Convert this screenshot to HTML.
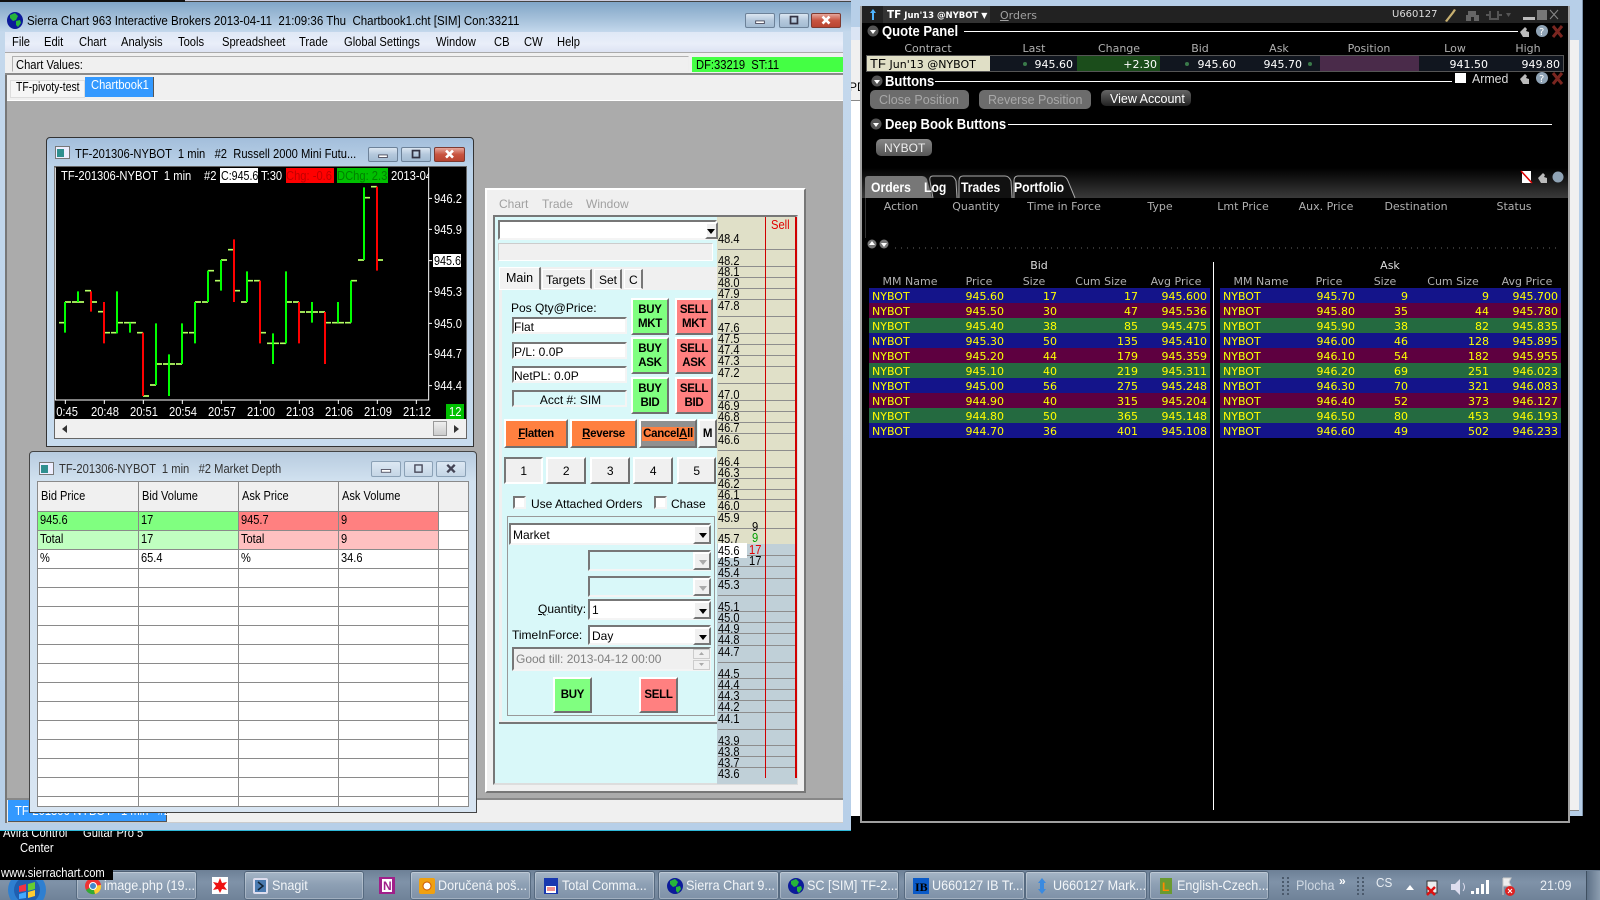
<!DOCTYPE html>
<html lang="en">
<head>
<meta charset="utf-8">
<title>Sierra Chart and IB Trader Workstation</title>
<style>
html,body{margin:0;padding:0;width:1600px;height:900px;overflow:hidden;background:#000}
body{position:relative;font:12px "Liberation Sans",sans-serif;color:#000}
.b{position:absolute;box-sizing:border-box}
.t{position:absolute;white-space:pre;line-height:14px}
.c{font-size:13px;transform:scaleX(.86);transform-origin:0 50%}
.bt{position:absolute;box-sizing:border-box;border:2px solid;border-color:#fff #707070 #707070 #fff;text-align:center;font-weight:bold;font-size:11.5px;letter-spacing:-.3px;line-height:14px;white-space:pre;display:flex;align-items:center;justify-content:center}
.sk{position:absolute;box-sizing:border-box;border:2px solid;border-color:#777 #f4f4f4 #f4f4f4 #777;background:#fff;font-size:12px;padding-left:2px;padding-top:2px;display:flex;align-items:center;white-space:pre}
.g{background:#80ff80}.rd{background:#ff8080}
.dd{position:absolute;box-sizing:border-box;width:18px;border:2px solid;border-color:#fff #777 #777 #fff;background:#f0f0f0}
.dd:after{content:"";position:absolute;left:4px;top:6px;border:4px solid transparent;border-top:5px solid #000}
.dd.o:after{border-top-color:#aaa}
.dd.sm:after{left:0;top:5px}
.wb{position:absolute;box-sizing:border-box;height:15px;border:1px solid #6d8299;border-radius:2px;background:linear-gradient(#dbe6f1,#b4c8dc 50%,#a3bbd2)}
.wb.x{background:linear-gradient(#e6a79b,#c8533f 50%,#b84430);border-color:#7e3a30}
.wb.o{background:linear-gradient(#dde8f3,#c5d6e6);border-color:#8ba1b6}
.wb svg{position:absolute;left:0;top:0;width:100%;height:100%}
.l{position:absolute;left:718px;width:78px;height:1px;background:#8d8d8d}
.p{position:absolute;left:718px;font-size:13px;line-height:14px;transform:scaleX(.85);transform-origin:0 50%}
.w{position:absolute;font:11px/14px "DejaVu Sans",sans-serif;color:#b0b0b0;transform:translateX(-50%);white-space:pre}
.v{position:absolute;font:11px/15px "DejaVu Sans",sans-serif;color:#fff;white-space:pre}
.hd{position:absolute;font:bold 15px/16px "Liberation Sans",sans-serif;color:#fff;transform:scaleX(.87);transform-origin:0 50%;white-space:pre}
.r{position:absolute;width:341px;height:15px;color:#ff0;font:11px/17px "DejaVu Sans",sans-serif}
.r span{position:absolute;top:0}
.r span:nth-child(1){left:3px}.r span:nth-child(2){right:206px}.r span:nth-child(3){right:153px}.r span:nth-child(4){right:72px}.r span:nth-child(5){right:3px}
.u{background:#14148a}.m{background:#5e0040}.n{background:#246a40}
table.dp{position:absolute;left:37px;top:481px;width:431px;border-collapse:collapse;table-layout:fixed;background:#fff}
table.dp td{border:1px solid #8a8a8a;height:18px;padding:0 0 0 2px;font-size:13px;line-height:14px;overflow:hidden;white-space:pre}
table.dp tr.e td{height:9px}
table.dp td span{display:inline-block;position:relative;top:-1px;transform:scaleX(.85);transform-origin:0 50%}
.tb{position:absolute;top:871px;height:29px;box-sizing:border-box;border:1px solid #566a80;border-top-color:#4f6074;border-radius:3px;background:linear-gradient(#a5b5c6,#8ea0b4 45%,#7e91a7);box-shadow:inset 0 0 0 1px rgba(255,255,255,.28);color:#f2f5f8;font-size:14px;line-height:27px;white-space:pre}
.tb span{position:absolute;left:27px;top:0;transform:scaleX(.9);transform-origin:0 50%}
.tb svg{position:absolute;left:7px;top:5px;width:18px;height:18px}
.ic{position:absolute}
</style>
</head>
<body>

<!-- Window behind IB -->
<div class="b" style="left:851px;top:0;width:732px;height:816px;background:#b7cfe8;border-right:1px solid #7d92aa"></div>
<div class="b" style="left:851px;top:27px;width:10px;height:13px;background:#dbe5f4"></div>
<div class="b" style="left:851px;top:40px;width:10px;height:60px;background:#f0f0f0"></div>
<div class="b" style="left:851px;top:100px;width:10px;height:1px;background:#888"></div>
<div class="b" style="left:851px;top:101px;width:10px;height:715px;background:#fff"></div>
<div class="t" style="left:849px;top:80px;font-size:12px">PD</div>
<div class="b" style="left:1569px;top:40px;width:10px;height:770px;background:#f0f0f0"></div>
<div class="b" style="left:1569px;top:810px;width:10px;height:1px;background:#888"></div>

<!-- Desktop -->
<div class="t c" style="left:3px;top:826px;color:#fff">Avira Control</div>
<div class="t c" style="left:83px;top:826px;color:#fff">Guitar Pro 5</div>
<div class="t c" style="left:20px;top:841px;color:#fff">Center</div>

<!-- Sierra main window -->
<div class="b" style="left:0;top:0;width:851px;height:831px;background:linear-gradient(180deg,#7da3c6 0,#a3bfd9 18px,#c4d8ec 32px,#b7cfe8 100%);border-bottom:1px solid #2fb8d8"></div>
<div class="b" style="left:0;top:0;width:185px;height:2px;background:#111"></div>
<div class="b" style="left:185px;top:0;width:666px;height:2px;background:#ccd;border-bottom:1px solid #444"></div>
<svg class="ic" style="left:7px;top:12px" width="16" height="17" viewBox="0 0 16 17"><ellipse cx="8" cy="8.5" rx="8" ry="8.5" fill="#0b1a9a"/><path d="M3 3l5-2 3 3-2 4-3 1-3-3zM9 9l4-1 1 3-3 4-2-2z" fill="#27b53a"/></svg>
<div class="t c" style="left:27px;top:14px;color:#000;transform:scaleX(.886)">Sierra Chart 963 Interactive Brokers 2013-04-11  21:09:36 Thu  Chartbook1.cht [SIM] Con:33211</div>
<div class="wb" style="left:745px;top:13px;width:30px"><svg viewBox="0 0 30 15"><rect x="10" y="8" width="10" height="3" fill="#fff" stroke="#445"/></svg></div>
<div class="wb" style="left:779px;top:13px;width:30px"><svg viewBox="0 0 30 15"><rect x="11" y="3" width="8" height="8" fill="none" stroke="#334" stroke-width="2"/></svg></div>
<div class="wb x" style="left:811px;top:13px;width:30px"><svg viewBox="0 0 30 15"><path d="M11 3l8 8M19 3l-8 8" stroke="#fff" stroke-width="3"/></svg></div>

<div class="b" style="left:5px;top:32px;width:838px;height:20px;background:linear-gradient(#dfe8f6,#e9eef9 60%,#dde3f3)"></div>
<div class="t c" style="left:12px;top:35px">File</div>
<div class="t c" style="left:44px;top:35px">Edit</div>
<div class="t c" style="left:79px;top:35px">Chart</div>
<div class="t c" style="left:121px;top:35px">Analysis</div>
<div class="t c" style="left:178px;top:35px">Tools</div>
<div class="t c" style="left:222px;top:35px">Spreadsheet</div>
<div class="t c" style="left:299px;top:35px">Trade</div>
<div class="t c" style="left:344px;top:35px">Global Settings</div>
<div class="t c" style="left:436px;top:35px">Window</div>
<div class="t c" style="left:494px;top:35px">CB</div>
<div class="t c" style="left:524px;top:35px">CW</div>
<div class="t c" style="left:557px;top:35px">Help</div>

<div class="b" style="left:5px;top:52px;width:838px;height:23px;background:#f0f0f0;border-top:1px solid #aaa;border-bottom:2px solid #8a8a8a"></div>
<div class="b" style="left:12px;top:56px;width:677px;height:16px;border:1px solid #b0b0b0;border-bottom-color:#eee;border-right-color:#eee"></div>
<div class="t c" style="left:16px;top:58px">Chart Values:</div>
<div class="b" style="left:692px;top:57px;width:151px;height:15px;background:#44ff44"></div>
<div class="t c" style="left:696px;top:58px">DF:33219  ST:11</div>

<div class="b" style="left:5px;top:75px;width:838px;height:26px;background:#f0f0f0;border-left:2px solid #777"></div>
<div class="b" style="left:10px;top:80px;width:75px;height:18px;background:#f6f6f6;border:1px solid #ddd"></div>
<div class="t c" style="left:16px;top:80px;transform:scaleX(.8)">TF-pivoty-test</div>
<div class="b" style="left:85px;top:77px;width:69px;height:20px;background:#3399ff;border-right:1px solid #555"></div>
<div class="t c" style="left:91px;top:78px;color:#fff">Chartbook1</div>
<div class="b" style="left:7px;top:100px;width:836px;height:1px;background:#fff"></div>
<div class="b" style="left:7px;top:101px;width:836px;height:697px;background:#ababab"></div>
<div class="b" style="left:5px;top:101px;width:2px;height:722px;background:#777"></div>
<div class="b" style="left:7px;top:798px;width:836px;height:25px;background:#f0f0f0;border-top:2px solid #888;border-bottom:1px solid #ccc"></div>
<div class="b" style="left:8px;top:800px;width:159px;height:22px;background:#3399ff;border-right:1px solid #555;border-bottom:1px solid #555"></div>
<div class="t c" style="left:15px;top:804px;color:#fff">TF-201306-NYBOT   1 min   #2</div>

<!-- Chart window -->
<div class="b" style="left:46px;top:137px;width:428px;height:310px;background:linear-gradient(#a3bedb,#bcd3e9 30px,#c8dcef);border:1px solid #333;border-radius:4px 4px 0 0"></div>
<svg class="ic" style="left:55px;top:146px" width="15" height="13" viewBox="0 0 15 13"><rect x=".5" y=".5" width="14" height="12" fill="#eef" stroke="#777"/><rect x="2" y="3" width="7" height="8" fill="#2f8f8f"/></svg>
<div class="t c" style="left:75px;top:147px">TF-201306-NYBOT  1 min   #2  Russell 2000 Mini Futu...</div>
<div class="wb" style="left:368px;top:147px;width:30px"><svg viewBox="0 0 30 15"><rect x="10" y="8" width="10" height="3" fill="#fff" stroke="#445"/></svg></div>
<div class="wb" style="left:401px;top:147px;width:30px"><svg viewBox="0 0 30 15"><rect x="11" y="3" width="8" height="8" fill="none" stroke="#334" stroke-width="2"/></svg></div>
<div class="wb x" style="left:434px;top:147px;width:31px"><svg viewBox="0 0 30 15"><path d="M11 3l8 8M19 3l-8 8" stroke="#fff" stroke-width="3"/></svg></div>
<div class="b" style="left:54px;top:166px;width:413px;height:273px;background:#f0f0f0;border:1px solid #666"></div>
<div class="b" style="left:55px;top:167px;width:411px;height:252px;background:#000"></div>
<svg class="ic" style="left:40px;top:130px" width="440" height="320" viewBox="0 0 1320 960">
<path d="M46 112V810H1166V112M1166 205h10M1166 298h10M1166 392h10M1166 485h10M1166 580h10M1166 673h10M1166 767h10M76 810v12M193 810v12M310 810v12M427 810v12M544 810v12M661 810v12M778 810v12M895 810v12M1012 810v12M1129 810v12" fill="none" stroke="#fff" stroke-width="3"/>
<path fill="none" stroke="#b4ff64" stroke-width="5" d="M57 578H75M75 516H93M96 516H132M135 482H153M153 516H171M174 545H192M192 608H210M213 608H231M231 578H249M252 578H288M291 608H309M309 798H327M330 765H348M348 702H366M369 702H405M408 702H426M426 608H444M447 608H465M465 516H483M486 516H504M504 422H522M525 452H543M543 390H561M564 359H582M582 482H600M603 516H621M621 452H639M642 452H660M660 608H678M681 640H717M720 640H738M738 516H756M759 516H777M777 546H795M798 546H834M837 546H855M855 578H873M876 578H912M915 578H933M933 452H951M954 390H972M972 203H990M993 170H1011M1011 390H1029"/>
<path fill="none" stroke="#00ff00" stroke-width="6" d="M75 516V608M114 484V516M231 484V610M270 578V608M348 580V765M387 673V798M426 580V702M465 516V640M504 422V516M543 390V482M621 424V516M699 610V702M738 424V640M816 516V578M894 516V578M933 452V578M972 172V390"/>
<path fill="none" stroke="#f00" stroke-width="6" d="M153 484V545M192 516V640M309 608V798M582 328V516M660 452V640M777 516V640M855 546V702M1011 170V422"/>
</svg>
<div class="b" style="left:220px;top:168px;width:38px;height:15px;background:#fff"></div>
<div class="b" style="left:286px;top:168px;width:48px;height:15px;background:#f00"></div>
<div class="b" style="left:337px;top:168px;width:51px;height:15px;background:#00c000"></div>
<div class="b" style="left:56px;top:167px;width:373px;height:17px;overflow:hidden;background:transparent">
<div class="t c" style="left:5px;top:2px;color:#fff">TF-201306-NYBOT  1 min</div>
<div class="t c" style="left:148px;top:2px;color:#fff">#2</div>
<div class="t c" style="left:165px;top:2px;color:#000;transform:scaleX(.82)">C:945.6</div>
<div class="t c" style="left:205px;top:2px;color:#fff">T:30</div>
<div class="t c" style="left:230px;top:2px;color:#c00000">Chg: -0.6</div>
<div class="t c" style="left:281px;top:2px;color:#008000">DChg: 2.3</div>
<div class="t c" style="left:335px;top:2px;color:#fff">2013-04-11</div>
</div>
<div class="t c" style="left:434px;top:192px;color:#fff">946.2</div>
<div class="t c" style="left:434px;top:223px;color:#fff">945.9</div>
<div class="b" style="left:433px;top:254px;width:28px;height:13px;background:#fff"></div>
<div class="t c" style="left:434px;top:254px;color:#000;transform:scaleX(.83)">945.6</div>
<div class="t c" style="left:434px;top:285px;color:#fff">945.3</div>
<div class="t c" style="left:434px;top:317px;color:#fff">945.0</div>
<div class="t c" style="left:434px;top:347px;color:#fff">944.7</div>
<div class="t c" style="left:434px;top:379px;color:#fff">944.4</div>
<div class="b" style="left:56px;top:404px;width:390px;height:15px;overflow:hidden">
<div class="t c" style="left:-6px;top:1px;color:#fff">20:45</div>
<div class="t c" style="left:35px;top:1px;color:#fff">20:48</div>
<div class="t c" style="left:74px;top:1px;color:#fff">20:51</div>
<div class="t c" style="left:113px;top:1px;color:#fff">20:54</div>
<div class="t c" style="left:152px;top:1px;color:#fff">20:57</div>
<div class="t c" style="left:191px;top:1px;color:#fff">21:00</div>
<div class="t c" style="left:230px;top:1px;color:#fff">21:03</div>
<div class="t c" style="left:269px;top:1px;color:#fff">21:06</div>
<div class="t c" style="left:308px;top:1px;color:#fff">21:09</div>
<div class="t c" style="left:347px;top:1px;color:#fff">21:12</div>
</div>
<div class="b" style="left:446px;top:404px;width:18px;height:15px;background:#00c000"></div>
<div class="t c" style="left:449px;top:405px;color:#fff">12</div>
<div class="b" style="left:433px;top:421px;width:14px;height:15px;background:linear-gradient(#eee,#ccc);border:1px solid #999"></div>
<svg class="ic" style="left:60px;top:424px" width="400" height="10" viewBox="0 0 400 10"><path d="M7 1v8L2 5zM394 1v8l5-4z" fill="#333"/></svg>

<!-- Market depth window -->
<div class="b" style="left:29px;top:451px;width:448px;height:362px;background:linear-gradient(#b7cbdf,#d2e2f0 30px,#d8e5f2);border:1px solid #444;border-radius:4px 4px 0 0"></div>
<svg class="ic" style="left:39px;top:462px" width="15" height="13" viewBox="0 0 15 13"><rect x=".5" y=".5" width="14" height="12" fill="#eef" stroke="#777"/><rect x="2" y="3" width="7" height="8" fill="#2f8f8f"/></svg>
<div class="t c" style="left:59px;top:462px;color:#333">TF-201306-NYBOT  1 min   #2 Market Depth</div>
<div class="wb o" style="left:371px;top:461px;width:30px;height:16px"><svg viewBox="0 0 30 15"><rect x="10" y="8" width="10" height="3" fill="#fff" stroke="#556"/></svg></div>
<div class="wb o" style="left:404px;top:461px;width:29px;height:16px"><svg viewBox="0 0 30 15"><rect x="11" y="3" width="8" height="8" fill="none" stroke="#445" stroke-width="1.5"/></svg></div>
<div class="wb o" style="left:436px;top:461px;width:30px;height:16px"><svg viewBox="0 0 30 15"><path d="M11 3l8 8M19 3l-8 8" stroke="#445" stroke-width="2.5"/></svg></div>
<table class="dp">
<colgroup><col style="width:101px"><col style="width:100px"><col style="width:100px"><col style="width:100px"><col style="width:30px"></colgroup>
<tr style="background:#f0f0f0"><td style="height:29px;padding-left:3px"><span>Bid Price</span></td><td style="padding-left:3px"><span>Bid Volume</span></td><td style="padding-left:3px"><span>Ask Price</span></td><td style="padding-left:3px"><span>Ask Volume</span></td><td></td></tr>
<tr><td style="background:#80ff80"><span>945.6</span></td><td style="background:#80ff80"><span>17</span></td><td style="background:#ff8080"><span>945.7</span></td><td style="background:#ff8080"><span>9</span></td><td></td></tr>
<tr><td style="background:#c0ffc0"><span>Total</span></td><td style="background:#c0ffc0"><span>17</span></td><td style="background:#ffc0c0"><span>Total</span></td><td style="background:#ffc0c0"><span>9</span></td><td></td></tr>
<tr><td><span>%</span></td><td><span>65.4</span></td><td><span>%</span></td><td><span>34.6</span></td><td></td></tr>
<tr><td></td><td></td><td></td><td></td><td></td></tr>
<tr><td></td><td></td><td></td><td></td><td></td></tr>
<tr><td></td><td></td><td></td><td></td><td></td></tr>
<tr><td></td><td></td><td></td><td></td><td></td></tr>
<tr><td></td><td></td><td></td><td></td><td></td></tr>
<tr><td></td><td></td><td></td><td></td><td></td></tr>
<tr><td></td><td></td><td></td><td></td><td></td></tr>
<tr><td></td><td></td><td></td><td></td><td></td></tr>
<tr><td></td><td></td><td></td><td></td><td></td></tr>
<tr><td></td><td></td><td></td><td></td><td></td></tr>
<tr><td></td><td></td><td></td><td></td><td></td></tr>
<tr><td></td><td></td><td></td><td></td><td></td></tr>
<tr class="e"><td></td><td></td><td></td><td></td><td></td></tr>
</table>

<!-- Trade window -->
<div class="b" style="left:485px;top:188px;width:321px;height:605px;background:#f0f0f0;border:2px solid;border-color:#fff #777 #777 #fff"></div>
<div class="t" style="left:499px;top:197px;color:#a0a0a0;font-size:12px">Chart</div>
<div class="t" style="left:542px;top:197px;color:#a0a0a0;font-size:12px">Trade</div>
<div class="t" style="left:586px;top:197px;color:#a0a0a0;font-size:12px">Window</div>
<div class="b" style="left:493px;top:215px;width:305px;height:570px;background:#d9f8f9;border:2px solid;border-color:#777 #ddd #ddd #777"></div>

<!-- ladder -->
<div class="b" style="left:717px;top:217px;width:80px;height:327px;background:#e0e0c8"></div>
<div class="b" style="left:717px;top:544px;width:80px;height:240px;background:#c0d0d8"></div>
<div class="l" style="top:249px"></div><div class="l" style="top:266px"></div><div class="l" style="top:277px"></div><div class="l" style="top:288px"></div><div class="l" style="top:299px"></div><div class="l" style="top:316px"></div><div class="l" style="top:333px"></div><div class="l" style="top:344px"></div><div class="l" style="top:355px"></div><div class="l" style="top:366px"></div><div class="l" style="top:383px"></div><div class="l" style="top:400px"></div><div class="l" style="top:411px"></div><div class="l" style="top:422px"></div><div class="l" style="top:433px"></div><div class="l" style="top:450px"></div><div class="l" style="top:467px"></div><div class="l" style="top:478px"></div><div class="l" style="top:489px"></div><div class="l" style="top:499px"></div><div class="l" style="top:511px"></div><div class="l" style="top:528px"></div><div class="l" style="top:555px"></div><div class="l" style="top:566px"></div><div class="l" style="top:578px"></div><div class="l" style="top:595px"></div><div class="l" style="top:611px"></div><div class="l" style="top:622px"></div><div class="l" style="top:633px"></div><div class="l" style="top:645px"></div><div class="l" style="top:662px"></div><div class="l" style="top:678px"></div><div class="l" style="top:689px"></div><div class="l" style="top:700px"></div><div class="l" style="top:712px"></div><div class="l" style="top:729px"></div><div class="l" style="top:745px"></div><div class="l" style="top:756px"></div><div class="l" style="top:767px"></div>
<div class="b" style="left:718px;top:543px;width:29px;height:15px;background:#fff"></div>
<div class="b" style="left:765px;top:217px;width:1px;height:561px;background:#d00000"></div>
<div class="b" style="left:795px;top:217px;width:2px;height:561px;background:#d00000"></div>
<div class="t c" style="left:771px;top:218px;color:#e00000">Sell</div>
<div class="p" style="top:232px">48.4</div><div class="p" style="top:254px">48.2</div><div class="p" style="top:265px">48.1</div><div class="p" style="top:276px">48.0</div><div class="p" style="top:287px">47.9</div><div class="p" style="top:299px">47.8</div><div class="p" style="top:321px">47.6</div><div class="p" style="top:332px">47.5</div><div class="p" style="top:343px">47.4</div><div class="p" style="top:354px">47.3</div><div class="p" style="top:366px">47.2</div><div class="p" style="top:388px">47.0</div><div class="p" style="top:399px">46.9</div><div class="p" style="top:410px">46.8</div><div class="p" style="top:421px">46.7</div><div class="p" style="top:433px">46.6</div><div class="p" style="top:455px">46.4</div><div class="p" style="top:466px">46.3</div><div class="p" style="top:477px">46.2</div><div class="p" style="top:488px">46.1</div><div class="p" style="top:499px">46.0</div><div class="p" style="top:511px">45.9</div><div class="p" style="top:532px">45.7</div><div class="p" style="top:544px">45.6</div><div class="p" style="top:555px">45.5</div><div class="p" style="top:566px">45.4</div><div class="p" style="top:578px">45.3</div><div class="p" style="top:600px">45.1</div><div class="p" style="top:611px">45.0</div><div class="p" style="top:622px">44.9</div><div class="p" style="top:633px">44.8</div><div class="p" style="top:645px">44.7</div><div class="p" style="top:667px">44.5</div><div class="p" style="top:678px">44.4</div><div class="p" style="top:689px">44.3</div><div class="p" style="top:700px">44.2</div><div class="p" style="top:712px">44.1</div><div class="p" style="top:734px">43.9</div><div class="p" style="top:745px">43.8</div><div class="p" style="top:756px">43.7</div><div class="p" style="top:767px">43.6</div>
<div class="t c" style="left:752px;top:520px">9</div>
<div class="t c" style="left:752px;top:531px;color:#00a000">9</div>
<div class="t c" style="left:749px;top:543px;color:#e00000">17</div>
<div class="t c" style="left:749px;top:554px">17</div>

<!-- left order panel -->
<div class="b" style="left:498px;top:220px;width:219px;height:20px;background:#fff;border:2px solid;border-color:#777 #f4f4f4 #f4f4f4 #777"></div>
<div class="dd sm" style="left:705px;top:222px;width:13px;height:17px"></div>
<div class="b" style="left:498px;top:243px;width:215px;height:18px;background:#f0f0f0;border:1px solid #ccc;border-right-color:#fff;border-bottom-color:#fff"></div>
<div class="b" style="left:499px;top:267px;width:218px;height:22px;background:#f0f0f0"></div>
<div class="b" style="left:499px;top:289px;width:218px;height:435px;background:#f0f0f0;border-bottom:2px solid #777"></div>
<div class="b" style="left:502px;top:290px;width:215px;height:431px;background:#d9f8f9"></div>
<div class="b" style="left:499px;top:267px;width:42px;height:23px;background:#f2f2f2;border:1px solid #fff;border-right:2px solid #777"></div>
<div class="t" style="left:506px;top:271px;font-size:12.5px">Main</div>
<div class="b" style="left:542px;top:269px;width:50px;height:20px;border:1px solid #fff;border-right:2px solid #777"></div>
<div class="t" style="left:546px;top:273px;font-size:12px">Targets</div>
<div class="b" style="left:594px;top:269px;width:28px;height:20px;border:1px solid #fff;border-right:2px solid #777"></div>
<div class="t" style="left:599px;top:273px;font-size:12px">Set</div>
<div class="b" style="left:624px;top:269px;width:19px;height:20px;border:1px solid #fff;border-right:2px solid #777"></div>
<div class="t" style="left:629px;top:273px;font-size:12px">C</div>

<div class="t" style="left:511px;top:301px">Pos Qty@Price:</div>
<div class="sk" style="left:512px;top:317px;width:115px;height:17px;padding-left:0">Flat</div>
<div class="sk" style="left:512px;top:342px;width:115px;height:17px;padding-left:0">P/L: 0.0P</div>
<div class="sk" style="left:512px;top:366px;width:115px;height:17px;padding-left:0">NetPL: 0.0P</div>
<div class="sk" style="left:512px;top:390px;width:115px;height:17px;background:#d9f8f9;justify-content:center">Acct #: SIM</div>
<div class="bt g" style="left:631px;top:298px;width:38px;height:37px">BUY
MKT</div>
<div class="bt g" style="left:631px;top:337px;width:38px;height:37px">BUY
ASK</div>
<div class="bt g" style="left:631px;top:377px;width:38px;height:37px">BUY
BID</div>
<div class="bt rd" style="left:675px;top:298px;width:38px;height:37px">SELL
MKT</div>
<div class="bt rd" style="left:675px;top:337px;width:38px;height:37px">SELL
ASK</div>
<div class="bt rd" style="left:675px;top:377px;width:38px;height:37px">SELL
BID</div>
<div class="bt" style="left:504px;top:419px;width:64px;height:29px;background:#ff8040"><span><u>F</u>latten</span></div>
<div class="bt" style="left:570px;top:419px;width:67px;height:29px;background:#ff8040"><span><u>R</u>everse</span></div>
<div class="bt" style="left:639px;top:419px;width:58px;height:29px;background:#909090"><span style="background:#ff8040;padding:0 1px;letter-spacing:-.3px;font-size:11.5px">Cancel<u>A</u>ll</span></div>
<div class="bt" style="left:698px;top:419px;width:19px;height:29px;background:#f0f0f0">M</div>
<div class="bt" style="left:504px;top:457px;width:39px;height:27px;background:#f0f0f0;font-weight:normal;font-size:12px;border-color:#777 #fff #fff #777">1</div>
<div class="bt" style="left:546px;top:457px;width:40px;height:27px;background:#f0f0f0;font-weight:normal;font-size:12px">2</div>
<div class="bt" style="left:590px;top:457px;width:40px;height:27px;background:#f0f0f0;font-weight:normal;font-size:12px">3</div>
<div class="bt" style="left:633px;top:457px;width:40px;height:27px;background:#f0f0f0;font-weight:normal;font-size:12px">4</div>
<div class="bt" style="left:677px;top:457px;width:39px;height:27px;background:#f0f0f0;font-weight:normal;font-size:12px">5</div>
<div class="sk" style="left:513px;top:496px;width:13px;height:13px"></div>
<div class="t" style="left:531px;top:497px">Use Attached Orders</div>
<div class="sk" style="left:654px;top:496px;width:13px;height:13px"></div>
<div class="t" style="left:671px;top:497px">Chase</div>
<div class="b" style="left:507px;top:516px;width:208px;height:200px;border:1px solid #999"></div>
<div class="sk" style="left:509px;top:523px;width:202px;height:22px">Market</div>
<div class="dd" style="left:693px;top:525px;height:19px"></div>
<div class="sk" style="left:588px;top:550px;width:123px;height:21px;background:#d9f8f9"></div>
<div class="dd o" style="left:693px;top:552px;height:18px"></div>
<div class="sk" style="left:588px;top:576px;width:123px;height:21px;background:#d9f8f9"></div>
<div class="dd o" style="left:693px;top:578px;height:18px"></div>
<div class="t" style="left:538px;top:602px"><u>Q</u>uantity:</div>
<div class="sk" style="left:588px;top:599px;width:123px;height:21px;padding-top:0">1</div>
<div class="dd" style="left:693px;top:601px;height:18px"></div>
<div class="t" style="left:512px;top:628px">TimeInForce:</div>
<div class="sk" style="left:588px;top:625px;width:123px;height:20px">Day</div>
<div class="dd" style="left:693px;top:627px;height:18px"></div>
<div class="sk" style="left:512px;top:647px;width:199px;height:24px;background:#f0f0f0;color:#808080;padding-top:0">Good till: 2013-04-12 00:00</div>
<div class="b" style="left:693px;top:649px;width:17px;height:10px;background:#f0f0f0;border:1px solid #ccc"></div>
<div class="b" style="left:693px;top:660px;width:17px;height:10px;background:#f0f0f0;border:1px solid #ccc"></div>
<svg class="ic" style="left:693px;top:649px" width="17" height="21" viewBox="0 0 17 21"><path d="M6 6h5L8.500 3zM6 14h5l-2.500 3z" fill="#aaa"/></svg>
<div class="bt g" style="left:553px;top:677px;width:39px;height:36px">BUY</div>
<div class="bt rd" style="left:639px;top:677px;width:39px;height:36px">SELL</div>

<!-- IB window -->
<div class="b" style="left:860px;top:6px;width:710px;height:817px;background:#000;border:2px solid #a0a0a0;border-top:0"></div>
<div class="b" style="left:862px;top:6px;width:706px;height:17px;background:#222"></div>
<div class="b" style="left:883px;top:6px;width:107px;height:17px;background:#333"></div>
<svg class="ic" style="left:869px;top:9px" width="8" height="12" viewBox="0 0 8 12"><path d="M4 0l3 4H5v7H3V4H1z" fill="#4fb4ff"/></svg>
<div class="t" style="left:887px;top:8px;color:#fff;font:bold 8.500px/14px 'DejaVu Sans',sans-serif"><span style="font-size:10.500px">TF</span> Jun'13 @NYBOT <span style="font-size:8px">▼</span></div>
<div class="t" style="left:1000px;top:9px;color:#a0a0a0;font:11px/14px 'DejaVu Sans',sans-serif"><u>O</u>rders</div>
<div class="t" style="left:1392px;top:8px;color:#ddd;font:10px/14px 'DejaVu Sans',sans-serif">U660127</div>
<svg class="ic" style="left:1444px;top:8px" width="118" height="14" viewBox="0 0 118 14"><path d="M1 13L8 4l2-3 2 1-2 3-7 9z" fill="#c8b070"/><path d="M24 3h8v4h3v6h-5V9h-3v4h-5V7h2z" fill="#666"/><path d="M42 7h4M46 3v8h8V3M54 7h4" stroke="#555" stroke-width="2" fill="none"/><path d="M62 5h5l-2.500 4z" fill="#555"/><rect x="79" y="9" width="12" height="3" fill="#bbb"/><rect x="93" y="2" width="10" height="10" fill="#777"/><path d="M106 2l8 9M114 2l-8 9" stroke="#888"/></svg>

<svg class="ic" style="left:866px;top:24px" width="14" height="14" viewBox="0 0 14 14"><circle cx="7" cy="7" r="5.500" fill="#555"/><path d="M4 6h6l-3 4z" fill="#fff"/></svg>
<div class="hd" style="left:882px;top:24px">Quote Panel</div>
<div class="b" style="left:964px;top:31px;width:554px;height:1px;background:#fff"></div>
<svg class="ic" style="left:1518px;top:24px" width="48" height="15" viewBox="0 0 48 15"><path d="M2 8l5-5 2 2-1 2 3 1v5H5z" fill="#bbb"/><circle cx="24" cy="7" r="6" fill="#8fa3b5"/><text x="21" y="11" font-size="10" fill="#fff" font-family="DejaVu Sans">?</text><path d="M35 2l9 11M44 2l-9 11" stroke="#7a2620" stroke-width="3"/></svg>
<div class="w" style="left:928px;top:42px">Contract</div>
<div class="w" style="left:1034px;top:42px">Last</div>
<div class="w" style="left:1119px;top:42px">Change</div>
<div class="w" style="left:1200px;top:42px">Bid</div>
<div class="w" style="left:1279px;top:42px">Ask</div>
<div class="w" style="left:1369px;top:42px">Position</div>
<div class="w" style="left:1455px;top:42px">Low</div>
<div class="w" style="left:1528px;top:42px">High</div>
<div class="b" style="left:867px;top:56px;width:696px;height:15px;background:#11161f;outline:1px solid #555"></div>
<div class="b" style="left:867px;top:56px;width:123px;height:15px;background:#e0dfc6"></div>
<div class="b" style="left:1077px;top:56px;width:83px;height:15px;background:#1b4d1b"></div>
<div class="b" style="left:1320px;top:56px;width:99px;height:15px;background:#4a2b4a"></div>
<div class="t" style="left:870px;top:56px;color:#000;font:13px/15px 'Liberation Sans',sans-serif">TF <span style="font:11px/15px 'DejaVu Sans',sans-serif">Jun'13 @NYBOT</span></div>
<div class="v" style="right:527px;top:57px">945.60</div>
<div class="v" style="right:443px;top:57px">+2.30</div>
<div class="v" style="right:364px;top:57px">945.60</div>
<div class="v" style="right:298px;top:57px">945.70</div>
<div class="v" style="right:112px;top:57px">941.50</div>
<div class="v" style="right:40px;top:57px">949.80</div>
<div class="b" style="left:1023px;top:62px;width:4px;height:4px;border-radius:50%;background:#3a7a4a"></div>
<div class="b" style="left:1185px;top:62px;width:4px;height:4px;border-radius:50%;background:#3a7a4a"></div>
<div class="b" style="left:1308px;top:62px;width:4px;height:4px;border-radius:50%;background:#3a7a4a"></div>

<svg class="ic" style="left:870px;top:74px" width="14" height="14" viewBox="0 0 14 14"><circle cx="7" cy="7" r="5.500" fill="#555"/><path d="M4 6h6l-3 4z" fill="#fff"/></svg>
<div class="hd" style="left:885px;top:74px">Buttons</div>
<div class="b" style="left:935px;top:81px;width:517px;height:1px;background:#fff"></div>
<div class="b" style="left:1455px;top:73px;width:11px;height:10px;background:#fff"></div>
<div class="t" style="left:1472px;top:72px;color:#ddd;font-size:13px;transform:scaleX(.95);transform-origin:0 50%">Armed</div>
<svg class="ic" style="left:1518px;top:71px" width="48" height="15" viewBox="0 0 48 15"><path d="M2 8l5-5 2 2-1 2 3 1v5H5z" fill="#bbb"/><circle cx="24" cy="7" r="6" fill="#8fa3b5"/><text x="21" y="11" font-size="10" fill="#fff" font-family="DejaVu Sans">?</text><path d="M35 2l9 11M44 2l-9 11" stroke="#7a2620" stroke-width="3"/></svg>
<div class="b" style="left:870px;top:90px;width:99px;height:19px;background:#6c6c6c;border-radius:5px"></div>
<div class="t" style="left:879px;top:93px;color:#a8a8a8;font-size:12.500px">Close Position</div>
<div class="b" style="left:979px;top:90px;width:112px;height:19px;background:#6c6c6c;border-radius:5px"></div>
<div class="t" style="left:988px;top:93px;color:#a8a8a8;font-size:12.500px">Reverse Position</div>
<div class="b" style="left:1101px;top:90px;width:90px;height:16px;background:linear-gradient(#666,#222);border-radius:5px"></div>
<div class="t" style="left:1110px;top:92px;color:#fff;font-size:12.500px">View Account</div>

<svg class="ic" style="left:869px;top:117px" width="14" height="14" viewBox="0 0 14 14"><circle cx="7" cy="7" r="5.500" fill="#555"/><path d="M4 6h6l-3 4z" fill="#fff"/></svg>
<div class="hd" style="left:885px;top:117px">Deep Book Buttons</div>
<div class="b" style="left:1008px;top:124px;width:544px;height:1px;background:#fff"></div>
<div class="b" style="left:876px;top:139px;width:56px;height:17px;background:linear-gradient(#888,#555);border-radius:5px"></div>
<div class="t" style="left:884px;top:141px;color:#eee;font-size:12px">NYBOT</div>

<div class="b" style="left:862px;top:168px;width:706px;height:30px;background:linear-gradient(#000,#3a3a3a)"></div>
<svg class="ic" style="left:862px;top:174px" width="215" height="25" viewBox="0 0 215 25"><path d="M3 24V5q0-3 3-3h54q3 0 5 3l5 19z" fill="#777"/><path d="M71 24l-3-17q-1-5 3-5h18q3 0 5 5l1 17M97 24V7q0-5 4-5h42q4 0 6 5l1 17M152 24V7q0-5 4-5h44q4 0 6 5l7 17" fill="#111" stroke="#aaa"/></svg>
<div class="hd" style="left:871px;top:179px;font-size:14px">Orders</div>
<div class="hd" style="left:924px;top:179px;font-size:14px">Log</div>
<div class="hd" style="left:961px;top:179px;font-size:14px">Trades</div>
<div class="hd" style="left:1014px;top:179px;font-size:14px">Portfolio</div>
<svg class="ic" style="left:1520px;top:170px" width="46" height="15" viewBox="0 0 46 15"><rect x="2" y="1" width="9" height="12" fill="#fff"/><path d="M1 1l11 12" stroke="#d00" stroke-width="1.500"/><path d="M18 8l5-5 2 2-1 2 3 1v5h-6z" fill="#bbb"/><circle cx="38" cy="7" r="5.500" fill="#8fa3b5"/></svg>
<div class="w" style="left:901px;top:200px">Action</div>
<div class="w" style="left:976px;top:200px">Quantity</div>
<div class="w" style="left:1064px;top:200px">Time in Force</div>
<div class="w" style="left:1160px;top:200px">Type</div>
<div class="w" style="left:1243px;top:200px">Lmt Price</div>
<div class="w" style="left:1326px;top:200px">Aux. Price</div>
<div class="w" style="left:1416px;top:200px">Destination</div>
<div class="w" style="left:1514px;top:200px">Status</div>
<div class="b" style="left:865px;top:198px;width:1px;height:40px;background:#333"></div>
<svg class="ic" style="left:866px;top:238px" width="692" height="12" viewBox="0 0 692 12"><circle cx="6" cy="6" r="4.500" fill="#777"/><path d="M3 7h6L6 3z" fill="#fff"/><circle cx="18" cy="6" r="4.500" fill="#777"/><path d="M15 5h6l-3 4z" fill="#fff"/><path d="M29 10H690" stroke="#444" stroke-dasharray="1 5" stroke-width="1.500"/></svg>
<div class="w" style="left:1039px;top:259px;color:#ddd">Bid</div>
<div class="w" style="left:1390px;top:259px;color:#ddd">Ask</div>
<div class="b" style="left:1213px;top:262px;width:1px;height:548px;background:#fff"></div>
<div class="w" style="left:910px;top:275px">MM Name</div>
<div class="w" style="left:979px;top:275px">Price</div>
<div class="w" style="left:1034px;top:275px">Size</div>
<div class="w" style="left:1101px;top:275px">Cum Size</div>
<div class="w" style="left:1176px;top:275px">Avg Price</div>
<div class="w" style="left:1261px;top:275px">MM Name</div>
<div class="w" style="left:1329px;top:275px">Price</div>
<div class="w" style="left:1385px;top:275px">Size</div>
<div class="w" style="left:1453px;top:275px">Cum Size</div>
<div class="w" style="left:1527px;top:275px">Avg Price</div>

<div class="r u" style="left:869px;top:288px"><span>NYBOT</span><span>945.60</span><span>17</span><span>17</span><span>945.600</span></div>
<div class="r m" style="left:869px;top:303px"><span>NYBOT</span><span>945.50</span><span>30</span><span>47</span><span>945.536</span></div>
<div class="r n" style="left:869px;top:318px"><span>NYBOT</span><span>945.40</span><span>38</span><span>85</span><span>945.475</span></div>
<div class="r u" style="left:869px;top:333px"><span>NYBOT</span><span>945.30</span><span>50</span><span>135</span><span>945.410</span></div>
<div class="r m" style="left:869px;top:348px"><span>NYBOT</span><span>945.20</span><span>44</span><span>179</span><span>945.359</span></div>
<div class="r n" style="left:869px;top:363px"><span>NYBOT</span><span>945.10</span><span>40</span><span>219</span><span>945.311</span></div>
<div class="r u" style="left:869px;top:378px"><span>NYBOT</span><span>945.00</span><span>56</span><span>275</span><span>945.248</span></div>
<div class="r m" style="left:869px;top:393px"><span>NYBOT</span><span>944.90</span><span>40</span><span>315</span><span>945.204</span></div>
<div class="r n" style="left:869px;top:408px"><span>NYBOT</span><span>944.80</span><span>50</span><span>365</span><span>945.148</span></div>
<div class="r u" style="left:869px;top:423px"><span>NYBOT</span><span>944.70</span><span>36</span><span>401</span><span>945.108</span></div>

<div class="r u" style="left:1220px;top:288px"><span>NYBOT</span><span>945.70</span><span>9</span><span>9</span><span>945.700</span></div>
<div class="r m" style="left:1220px;top:303px"><span>NYBOT</span><span>945.80</span><span>35</span><span>44</span><span>945.780</span></div>
<div class="r n" style="left:1220px;top:318px"><span>NYBOT</span><span>945.90</span><span>38</span><span>82</span><span>945.835</span></div>
<div class="r u" style="left:1220px;top:333px"><span>NYBOT</span><span>946.00</span><span>46</span><span>128</span><span>945.895</span></div>
<div class="r m" style="left:1220px;top:348px"><span>NYBOT</span><span>946.10</span><span>54</span><span>182</span><span>945.955</span></div>
<div class="r n" style="left:1220px;top:363px"><span>NYBOT</span><span>946.20</span><span>69</span><span>251</span><span>946.023</span></div>
<div class="r u" style="left:1220px;top:378px"><span>NYBOT</span><span>946.30</span><span>70</span><span>321</span><span>946.083</span></div>
<div class="r m" style="left:1220px;top:393px"><span>NYBOT</span><span>946.40</span><span>52</span><span>373</span><span>946.127</span></div>
<div class="r n" style="left:1220px;top:408px"><span>NYBOT</span><span>946.50</span><span>80</span><span>453</span><span>946.193</span></div>
<div class="r u" style="left:1220px;top:423px"><span>NYBOT</span><span>946.60</span><span>49</span><span>502</span><span>946.233</span></div>

<!-- Taskbar -->
<div class="b" style="left:0;top:870px;width:1600px;height:30px;background:linear-gradient(#6d8096,#7f92a8 40%,#6f8298)"></div>
<svg class="ic" style="left:8px;top:871px" width="38" height="29" viewBox="0 0 38 29"><circle cx="19" cy="19" r="19" fill="#2e7fd0"/><circle cx="19" cy="19" r="13" fill="#1f5fb0"/><path d="M11 15l7-2v7l-7 1z" fill="#e34"/><path d="M20 13l7-2v7l-7 2z" fill="#6c3"/><path d="M11 23l7-2v6l-7 1z" fill="#4af"/><path d="M20 21l7-2v6l-7 2z" fill="#fc3"/></svg>
<div class="tb" style="left:76px;width:121px"><svg viewBox="0 0 18 18"><circle cx="9" cy="9" r="8" fill="#e33"/><path d="M9 9L2 13a8 8 0 0 0 9 4z" fill="#3a3"/><path d="M9 9l8-1a8 8 0 0 1-6 9z" fill="#fc3"/><circle cx="9" cy="9" r="3.500" fill="#48c" stroke="#fff"/></svg><span>image.php (19...</span></div>
<svg class="ic" style="left:212px;top:877px" width="16" height="17" viewBox="0 0 16 17"><rect width="16" height="17" fill="#fff"/><path d="M8 1l2 5 5-1-3 4 3 4-5-1-2 4-2-4-5 1 3-4-3-4 5 1z" fill="#e11"/></svg>
<div class="tb" style="left:244px;width:120px"><svg viewBox="0 0 18 18"><rect x="1" y="1" width="15" height="16" rx="2" fill="#dde"/><rect x="3" y="3" width="11" height="12" fill="#4a7ab0"/><path d="M6 5l5 4-5 4" stroke="#123" stroke-width="1.500" fill="none"/></svg><span>Snagit</span></div>
<svg class="ic" style="left:379px;top:877px" width="16" height="17" viewBox="0 0 16 17"><rect width="16" height="17" fill="#a0208a"/><rect x="3" y="2" width="10" height="13" fill="#fff"/><text x="4" y="13" font-size="12" font-weight="bold" fill="#a0208a" font-family="Liberation Sans">N</text></svg>
<div class="tb" style="left:410px;width:121px"><svg viewBox="0 0 18 18"><rect x="1" y="1" width="16" height="16" rx="2" fill="#f0a010"/><circle cx="9" cy="9" r="4" fill="#fff" stroke="#c50"/></svg><span>Doručená poš...</span></div>
<div class="tb" style="left:534px;width:121px"><svg viewBox="0 0 18 18"><rect x="2" y="1" width="14" height="16" fill="#1838b0"/><rect x="4" y="9" width="10" height="7" fill="#fff"/><path d="M5 11h8M5 13h8" stroke="#d22"/></svg><span>Total Comma...</span></div>
<div class="tb" style="left:658px;width:121px"><svg viewBox="0 0 18 18"><circle cx="9" cy="9" r="8" fill="#0b1a9a"/><path d="M4 4l5-2 3 3-2 4-3 1-3-3zM10 10l4-1 1 3-3 4-2-2z" fill="#27b53a"/></svg><span>Sierra Chart 9...</span></div>
<div class="tb" style="left:779px;width:120px"><svg viewBox="0 0 18 18"><circle cx="9" cy="9" r="8" fill="#0b1a9a"/><path d="M4 4l5-2 3 3-2 4-3 1-3-3zM10 10l4-1 1 3-3 4-2-2z" fill="#27b53a"/></svg><span>SC [SIM] TF-2...</span></div>
<div class="tb" style="left:904px;width:121px"><svg viewBox="0 0 18 18"><rect x="1" y="1" width="16" height="16" fill="#0a5ac8"/><text x="3" y="14" font-size="12" font-weight="bold" fill="#000" font-family="Liberation Serif">IB</text></svg><span>U660127 IB Tr...</span></div>
<div class="tb" style="left:1025px;width:122px"><svg viewBox="0 0 18 18"><path d="M9 1l4 5h-2v6h2l-4 5-4-5h2V6H5z" fill="#3a8ae0"/></svg><span>U660127 Mark...</span></div>
<div class="tb" style="left:1149px;width:120px"><svg viewBox="0 0 18 18"><rect x="3" y="1" width="12" height="16" fill="#6a9a30"/><text x="5" y="14" font-size="12" font-weight="bold" fill="#f80" font-family="Liberation Sans">L</text></svg><span>English-Czech...</span></div>
<div class="t" style="left:1296px;top:878px;color:#cfd8e2;font-size:14px;transform:scaleX(.9);transform-origin:0 50%">Plocha</div>
<div class="t" style="left:1339px;top:874px;color:#fff;font-size:12px;font-weight:bold">»</div>
<div class="t" style="left:1376px;top:876px;color:#e8edf2;font-size:13px;transform:scaleX(.9);transform-origin:0 50%">CS</div>
<svg class="ic" style="left:1281px;top:875px" width="240" height="24" viewBox="0 0 240 24"><path d="M2 2v20M7 2v20M77 2v20M82 2v20" stroke="#4b5a6c" stroke-dasharray="2 2" stroke-width="2"/><path d="M125 15h8l-4-5z" fill="#fff"/><path d="M146 6h10v12h-10z" fill="#eee" stroke="#333"/><path d="M146 12l8 8M154 12l-8 8" stroke="#d11" stroke-width="2.500"/><path d="M170 9h4l5-5v16l-5-5h-4z" fill="#dde"/><path d="M182 8q3 4 0 8" stroke="#dde" fill="none"/><path d="M190 19h3v-3h-3zM195 19h3v-6h-3zM200 19h3V9h-3zM205 19h3V5h-3z" fill="#fff"/><path d="M222 3v17M222 3h8l-2 4 2 4h-8" fill="#eee" stroke="#ccc"/><circle cx="229" cy="16" r="5" fill="#d22"/><path d="M227 14l4 4M231 14l-4 4" stroke="#fff"/></svg>
<div class="t" style="left:1540px;top:878px;color:#e8edf2;font-size:14px;transform:scaleX(.9);transform-origin:0 50%">21:09</div>
<div class="b" style="left:1586px;top:871px;width:14px;height:29px;background:linear-gradient(90deg,#5f7288,#8c9db0);border-left:1px solid #3f4f60"></div>
<div class="b" style="left:0;top:869px;width:113px;height:11px;background:#000"></div>
<div class="t c" style="left:1px;top:866px;color:#fff">www.sierrachart.com</div>
</body>
</html>
